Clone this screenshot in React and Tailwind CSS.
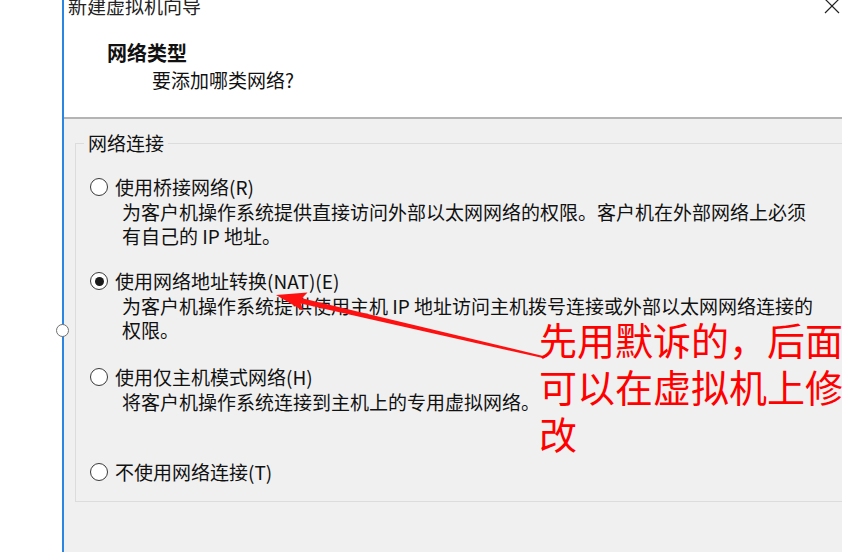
import React from "react";

function Radio({ checked }) {
  return (
    <span className="flex h-[18px] w-[18px] shrink-0 items-center justify-center rounded-full border border-[#3a3a3a] bg-white">
      {checked && <span className="h-[9px] w-[9px] rounded-full bg-[#1a1a1a]" />}
    </span>
  );
}

function Option({ label, lines, checked, className }) {
  return (
    <div className={className}>
      <div className="flex h-[24px] items-center">
        <Radio checked={checked} />
        <span className="ml-[7px] whitespace-nowrap">{label}</span>
      </div>
      {lines && (
        <div className="mt-[1px] pl-[32px]">
          {lines.map((l) => (
            <div key={l} className="whitespace-nowrap">{l}</div>
          ))}
        </div>
      )}
    </div>
  );
}

export default function App() {
  return (
    <div className="relative flex h-[552px] w-[842px] overflow-hidden bg-white font-['Noto_Sans_CJK_SC','Noto_Sans',sans-serif] text-[19px] leading-[24px] text-[#111]">
      <div className="w-[62px] shrink-0 bg-white" />
      <div className="flex min-w-0 flex-1 flex-col border-l-2 border-[#2a86e0]">
        {/* header */}
        <div className="h-[119px] shrink-0 border-b-2 border-[#b4b4b4] bg-white">
          <div className="mt-[-4px] flex items-start justify-between pl-[4px]">
            <span className="leading-[20px] text-[#222]">新建虚拟机向导</span>
            <svg width="16" height="16" viewBox="0 0 16 16" className="mr-[2px] mt-[2px]">
              <path d="M1 1 L15 15 M15 1 L1 15" stroke="#222" strokeWidth="1.2" fill="none" />
            </svg>
          </div>
          <div className="mt-[25px] pl-[43px] text-[20px] font-bold">网络类型</div>
          <div className="mt-[3px] pl-[88px]">要添加哪类网络?</div>
        </div>

        {/* body */}
        <div className="flex-1 bg-[#f0f0f0]">
          <fieldset className="ml-[11px] mt-[14px] w-[820px] border border-[#dcdcdc] pb-[17px] pl-[8px]">
            <legend className="px-[4px] leading-[20px]">网络连接</legend>
            <div className="pl-[6px] pt-[22px]">
              <Option
                label="使用桥接网络(R)"
                lines={[
                  "为客户机操作系统提供直接访问外部以太网网络的权限。客户机在外部网络上必须",
                  "有自己的 IP 地址。",
                ]}
              />
              <Option
                className="mt-[21px]"
                checked
                label="使用网络地址转换(NAT)(E)"
                lines={[
                  "为客户机操作系统提供使用主机 IP 地址访问主机拨号连接或外部以太网网络连接的",
                  "权限。",
                ]}
              />
              <Option
                className="mt-[23px]"
                label="使用仅主机模式网络(H)"
                lines={["将客户机操作系统连接到主机上的专用虚拟网络。"]}
              />
              <Option className="mt-[46px]" label="不使用网络连接(T)" />
            </div>
          </fieldset>
        </div>
      </div>

      {/* resize handle on the window edge */}
      <span className="absolute left-[56px] top-[324px] h-[13px] w-[13px] rounded-full border border-[#707070] bg-white" />

      {/* annotation arrow */}
      <svg className="pointer-events-none absolute left-0 top-0" width="842" height="552">
        <polygon
          points="276,295 307.5,292.5 302,298.2 543.2,356 542.8,358 300.7,303.6 303.5,311"
          fill="#ff1010"
        />
      </svg>

      {/* annotation text */}
      <div className="absolute left-[539px] top-[315px] w-[304px] text-[38px] leading-[47px] text-[#ff0000]">
        先用默诉的，后面可以在虚拟机上修改
      </div>
    </div>
  );
}
